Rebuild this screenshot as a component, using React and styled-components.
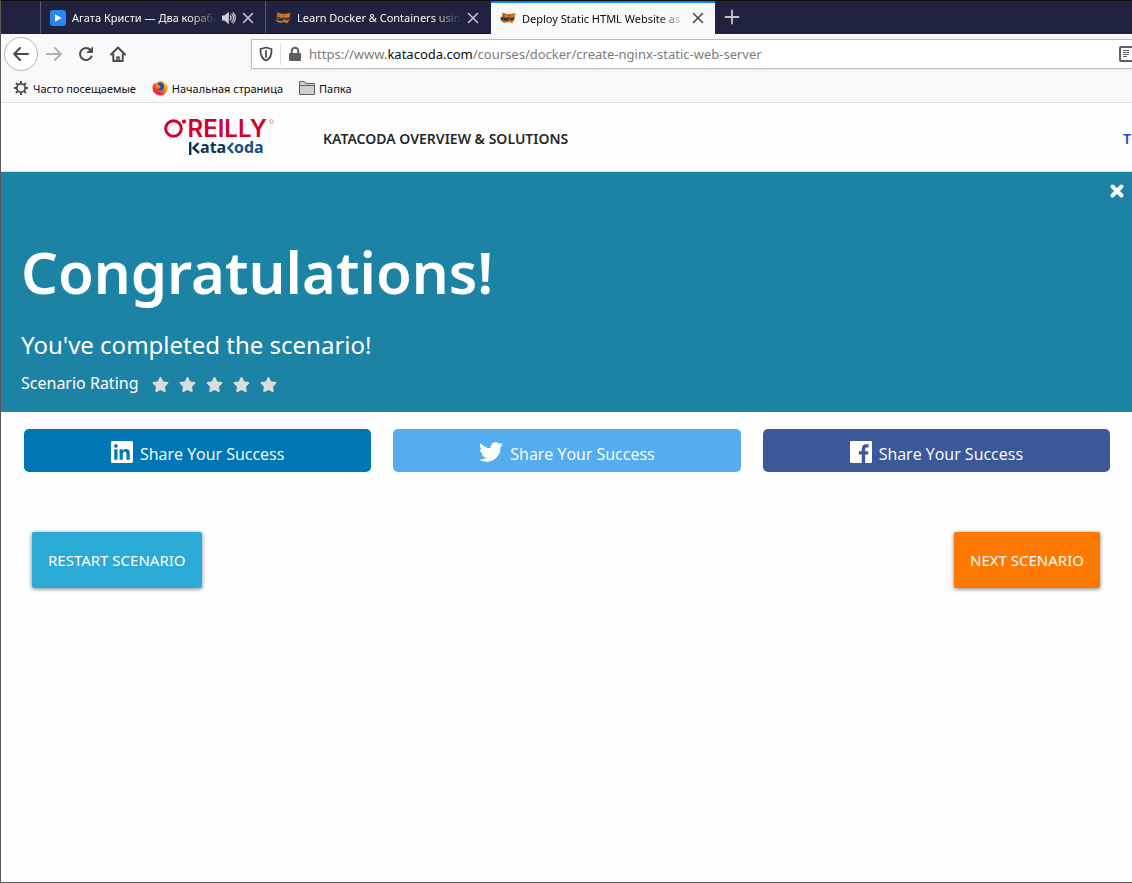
import React from 'react';
import styled, { createGlobalStyle } from 'styled-components';
import { FaStar, FaTwitter } from 'react-icons/fa';

const GlobalStyle = createGlobalStyle`
  *, *::before, *::after { box-sizing: border-box; }
  body { margin: 0; background: #fefefe; font-family: "Noto Sans", "Open Sans", sans-serif; }
  button { font: inherit; }
  svg { display: block; flex: none; }
`;

const Window = styled.div`
  min-height: 100vh;
  display: flex;
  flex-direction: column;
  border-left: 1px solid #5a5a5a;
  border-bottom: 1px solid #5a5a5a;
  overflow: hidden;
`;

const TabBar = styled.div`
  display: flex;
  height: 34px;
  padding-left: 39px;
  background: #20233f;
  border-top: 1px solid #0b0b12;
`;

const Tab = styled.div`
  display: flex;
  align-items: center;
  width: 225px;
  min-width: 0;
  padding: 1px 9px 0 9px;
  font-size: 11px;
  color: ${(p) => (p.$active ? '#0c0c0d' : '#f9f9fa')};
  background: ${(p) => (p.$active ? '#f9f9fa' : 'transparent')};
  border-left: 1px solid ${(p) => (p.$active ? '#20233f' : '#575971')};
  border-bottom: ${(p) => (p.$active ? '0' : '1px solid #1a0f28')};
  box-shadow: ${(p) => (p.$active ? 'inset 0 2px 0 #0a84ff' : 'none')};
`;

const TabTitle = styled.span`
  flex: 1;
  min-width: 0;
  margin: 0 4px 0 6px;
  overflow: hidden;
  white-space: nowrap;
  mask-image: linear-gradient(to left, transparent, #000 28px);
`;

const IconButton = styled.button`
  display: flex;
  align-items: center;
  justify-content: center;
  width: ${(p) => p.$size || 16}px;
  height: ${(p) => p.$size || 16}px;
  padding: 0;
  border: 0;
  background: none;
  color: ${(p) => p.$color || 'inherit'};
`;

const SoundButton = styled(IconButton)`
  margin-right: 3px;
`;

const NewTab = styled(IconButton)`
  width: 34px;
  height: 32px;
  color: #c4c5cf;
`;

const Toolbar = styled.div`
  display: flex;
  align-items: center;
  height: 40px;
  padding-left: 3px;
  background: #f9f9fa;
  color: #4a4a4f;
`;

const BackButton = styled(IconButton)`
  width: 34px;
  height: 34px;
  border: 1px solid #b4b4b6;
  border-radius: 50%;
  background: #fff;
`;

const NavButton = styled(IconButton)`
  width: 32px;
  height: 32px;
  opacity: ${(p) => (p.disabled ? 0.4 : 1)};
`;

const UrlField = styled.div`
  display: flex;
  flex: 1;
  min-width: 0;
  align-items: center;
  height: 30px;
  margin-left: 117px;
  padding-left: 6px;
  background: #fff;
  border: 1px solid #bcbcbe;
  border-right: 0;
  box-shadow: 0 1px 4px rgba(0, 0, 0, 0.07);
`;

const Divider = styled.span`
  width: 1px;
  height: 22px;
  margin: 0 6px;
  background: #dcdcde;
`;

const Address = styled.span`
  flex: 1;
  min-width: 0;
  margin-left: 6px;
  overflow: hidden;
  white-space: nowrap;
  font-size: 13px;
  color: #7b7b7d;
  b { font-weight: 400; color: #0c0c0d; }
`;

const Bookmarks = styled.nav`
  display: flex;
  align-items: center;
  gap: 16px;
  height: 29px;
  padding: 0 12px;
  font-size: 11px;
  background: #f9f9fa;
  border-bottom: 1px solid #e0e0e2;
`;

const Bookmark = styled.a`
  display: flex;
  align-items: center;
  gap: 4px;
  color: #0c0c0d;
  text-decoration: none;
  white-space: nowrap;
`;

const SiteHeader = styled.header`
  display: flex;
  align-items: center;
  height: 69px;
  padding-left: 162px;
  border-bottom: 1px solid #dcdcdc;
`;

const SiteLink = styled.a`
  margin-left: ${(p) => (p.$end ? 'auto' : '48px')};
  padding: 3px ${(p) => (p.$end ? 1 : 0)}px 0 0;
  font-size: 14px;
  font-weight: 600;
  color: ${(p) => (p.$end ? '#0a4cf5' : '#26292b')};
  text-decoration: none;
  white-space: nowrap;
`;

const Banner = styled.section`
  display: flex;
  flex-direction: column;
  height: 240px;
  padding: 7px 3px 0 20px;
  color: #fff;
  background: #1d83a5;
`;

const CloseButton = styled(IconButton)`
  width: 24px;
  height: 24px;
  align-self: flex-end;
`;

const Title = styled.h1`
  margin: 25px 0 0;
  font-size: 58px;
  line-height: 88px;
  font-weight: 600;
`;

const Subtitle = styled.h2`
  margin: 10px 0 0;
  font-size: 24px;
  line-height: 38px;
  font-weight: 400;
`;

const Rating = styled.div`
  display: flex;
  align-items: center;
  gap: 13px;
  height: 38px;
  font-size: 16px;
`;

const Stars = styled.div`
  display: flex;
  gap: 9px;
  padding-top: 2px;
  color: #dcdcdc;
`;

const ShareRow = styled.div`
  display: grid;
  grid-template-columns: repeat(3, 1fr);
  gap: 22px;
  padding: 17px 22px 0 23px;
`;

const ShareButton = styled.button`
  display: flex;
  align-items: center;
  justify-content: center;
  gap: 7px;
  height: 43px;
  padding: 3px 0 0;
  border: 0;
  border-radius: 5px;
  font-family: "Open Sans", sans-serif;
  font-size: 16px;
  color: #fff;
  background: ${(p) => p.$color};
`;

const ShareLabel = styled.span`
  padding-top: 4px;
`;

const Actions = styled.div`
  display: flex;
  justify-content: space-between;
  padding: 60px 32px 0 31px;
`;

const ActionButton = styled.button`
  height: 56px;
  padding: 0 16px;
  border: 0;
  border-radius: 2px;
  font-size: 15px;
  text-transform: uppercase;
  color: #fff;
  background: ${(p) => p.$color};
  box-shadow: 0 1px 4px rgba(0, 0, 0, 0.5);
`;

const Stroke = ({ size = 16, children, ...rest }) => (
  <svg width={size} height={size} viewBox="0 0 16 16" fill="none" stroke="currentColor" strokeWidth="2" strokeLinecap="round" strokeLinejoin="round" {...rest}>
    {children}
  </svg>
);

const CloseTab = ({ color }) => (
  <IconButton aria-label="Close tab" $color={color}>
    <Stroke strokeWidth="1.6"><path d="M3.5 3.5l9 9M12.5 3.5l-9 9" /></Stroke>
  </IconButton>
);

const PlayIcon = () => (
  <svg width="16" height="16" viewBox="0 0 16 16">
    <rect width="16" height="16" rx="3" fill="#2787f5" />
    <path d="M5 4.2v7.6L11.6 8z" fill="#fff" />
  </svg>
);

const CatIcon = () => (
  <svg width="16" height="16" viewBox="0 0 16 16">
    <path d="M2.600 2.200l2.600 1.400 4.300.4 6-1-.7 3.600-.6 3.400-1.600 3-3.600-.8-4.500.6-3.700-2L1.500 8z" fill="#d9741c" />
    <path d="M.5 7.600l3-.9 2.700 1.200 2.500-.7 3 .9 3-1-.8 2.400-2.300 1-2.400-.9-2 1.300-3-.2L.6 9.600z" fill="#26384f" />
    <path d="M3 4.500l2 .6-1.400.9zM8 5l2.500.3-1.200 1z" fill="#5b4637" />
    <path d="M2 8.200l1.700-.3.600 1zM8 9l2-.6.7 1z" fill="#7f93a6" />
    <path d="M1 10.300l3 1.700 2.500-.3-.8.9-2.500-.2z" fill="#6b747e" />
  </svg>
);

const SpeakerIcon = () => (
  <svg width="14" height="14" viewBox="0 0 14 14" fill="none" stroke="#d0d1da" strokeWidth="1.2" strokeLinecap="round">
    <path d="M.6 5h2.200L6.200 2v10L2.800 9H.6z" fill="#d0d1da" />
    <path d="M8.300 5a3 3 0 0 1 0 4M9.800 3.200a5 5 0 0 1 0 7.600M11 1.800a7 7 0 0 1 0 10.400" />
  </svg>
);

const GearIcon = () => (
  <svg width="16" height="16" viewBox="0 0 16 16" fill="none" stroke="#4a4a4f">
    <circle cx="8" cy="8" r="4.200" strokeWidth="1.800" />
    <path d="M8 1v2.500M8 12.500V15M1 8h2.500M12.500 8H15M3 3l1.900 1.900M11.100 11.100L13 13M3 13l1.900-1.900M11.100 4.900L13 3" strokeWidth="2" />
  </svg>
);

const FirefoxIcon = () => (
  <svg width="16" height="16" viewBox="0 0 16 16">
    <defs>
      <linearGradient id="flame" x1="1" y1="0" x2="0.2" y2="1">
        <stop offset="0" stopColor="#fff04a" />
        <stop offset=".4" stopColor="#ff9a1a" />
        <stop offset=".75" stopColor="#f5342e" />
        <stop offset="1" stopColor="#e01084" />
      </linearGradient>
    </defs>
    <path d="M2 3l.6 1L4 2l.8 1.200C6 2 7 1 8.800 .5c3 .4 6.700 3 6.700 7.300A7.500 7.500 0 0 1 .5 8C.5 6 1 4.500 2 3z" fill="url(#flame)" />
    <path d="M6 3c2-1.500 4.500-.5 5.500 1.500s.8 4.500-1 5.500-4.500.5-5-1.500c1.500.6 3-.2 3-1.200L6 6z" fill="#1f4fb5" />
    <path d="M4.200 4.800L6.500 5l2 1.300-1.800 1-.8 1.500C4.500 8 4 6.500 4.200 4.800z" fill="#ff8a16" />
  </svg>
);

const FolderIcon = () => (
  <svg width="16" height="16" viewBox="0 0 16 16" stroke="#5f5f62">
    <path d="M.5 14.500v-13h5l1.500 2h8.500v11z" fill="#cfcfd1" />
    <path d="M.5 5.500h15" />
  </svg>
);

const Logo = () => (
  <svg width="112" height="44" viewBox="0 0 112 44" role="img" aria-label="O'Reilly Katacoda">
    <circle cx="10.500" cy="13.500" r="7.800" fill="none" stroke="#d3002d" strokeWidth="3" />
    <circle cx="21" cy="6.500" r="2.600" fill="#d3002d" stroke="#fefefe" strokeWidth="1" />
    <text x="24.500" y="22" fontFamily="Inter, sans-serif" fontSize="24" fontWeight="600" fill="#d3002d">REILLY</text>
    <circle cx="108.500" cy="6.500" r="1.800" fill="none" stroke="#e88a9c" strokeWidth="1" />
    <path d="M27.200 27v13M35.500 28l-5 5 5.500 5" fill="none" stroke="#0b3553" strokeWidth="2.400" />
    <text x="37" y="38" fontFamily="Open Sans, sans-serif" fontSize="16" fontWeight="700" fill="#0b3553">ata</text>
    <path d="M70 28l-4.500 5 4.500 5" fill="none" stroke="#0f4f8a" strokeWidth="2.400" />
    <text x="71" y="38" fontFamily="Open Sans, sans-serif" fontSize="16" fontWeight="700" fill="#0f4f8a">oda</text>
  </svg>
);

const LinkedinIcon = () => (
  <svg width="22" height="22" viewBox="0 0 24 24" fill="currentColor">
    <path d="M20.447 20.452h-3.554v-5.569c0-1.328-.027-3.037-1.852-3.037-1.853 0-2.136 1.445-2.136 2.939v5.667H9.351V9h3.414v1.561h.046c.477-.9 1.637-1.850 3.370-1.850 3.601 0 4.267 2.370 4.267 5.455v6.286zM5.337 7.433c-1.144 0-2.063-.926-2.063-2.065 0-1.138.92-2.063 2.063-2.063 1.140 0 2.064.925 2.064 2.063 0 1.139-.925 2.065-2.064 2.065zm1.782 13.019H3.555V9h3.564v11.452zM22.225 0H1.771C.792 0 0 .774 0 1.729v20.542C0 23.227.792 24 1.771 24h20.451C23.200 24 24 23.227 24 22.271V1.729C24 .774 23.200 0 22.222 0h.003z" />
  </svg>
);

const FacebookIcon = () => (
  <svg width="22" height="22" viewBox="0 0 24 24" fill="currentColor">
    <path d="M22.676 0H1.324C.593 0 0 .593 0 1.324v21.352C0 23.408.593 24 1.324 24h11.494v-9.294H9.689v-3.621h3.129V8.410c0-3.099 1.894-4.785 4.659-4.785 1.325 0 2.464.097 2.796.141v3.240h-1.921c-1.500 0-1.792.721-1.792 1.771v2.311h3.584l-.465 3.630H16.560V24h6.115c.733 0 1.325-.592 1.325-1.324V1.324C24 .593 23.408 0 22.676 0" />
  </svg>
);

const shares = [
  { name: 'LinkedIn', color: '#0077b5', icon: <LinkedinIcon /> },
  { name: 'Twitter', color: '#55acee', icon: <FaTwitter size={24} /> },
  { name: 'Facebook', color: '#3b5998', icon: <FacebookIcon /> },
];

export default function App() {
  return (
    <>
      <GlobalStyle />
      <Window>
        <TabBar>
          <Tab>
            <PlayIcon />
            <TabTitle>Агата Кристи — Два корабля</TabTitle>
            <SoundButton aria-label="Mute tab"><SpeakerIcon /></SoundButton>
            <CloseTab color="#c4c5cf" />
          </Tab>
          <Tab>
            <CatIcon />
            <TabTitle>Learn Docker &amp; Containers using</TabTitle>
            <CloseTab color="#c4c5cf" />
          </Tab>
          <Tab $active>
            <CatIcon />
            <TabTitle>Deploy Static HTML Website as</TabTitle>
            <CloseTab color="#4a4a4f" />
          </Tab>
          <NewTab aria-label="New tab">
            <Stroke strokeWidth="1.800"><path d="M8 1.500v13M1.500 8h13" /></Stroke>
          </NewTab>
        </TabBar>

        <Toolbar>
          <BackButton aria-label="Back">
            <Stroke><path d="M15 8H1.500M7 2L1.200 8 7 14" /></Stroke>
          </BackButton>
          <NavButton aria-label="Forward" disabled>
            <Stroke><path d="M1 8h13.500M9 2l5.800 6L9 14" /></Stroke>
          </NavButton>
          <NavButton aria-label="Reload">
            <Stroke>
              <path d="M13.500 10.500A6 6 0 1 1 12.500 4" />
              <path d="M14.500 1.500v5h-5z" fill="currentColor" strokeWidth="1" />
            </Stroke>
          </NavButton>
          <NavButton aria-label="Home">
            <Stroke>
              <path d="M1 8.500l7-7 7 7M3.300 8.500V15h9.400V8.500" />
              <path d="M7 15v-4h2v4" strokeWidth="1.500" />
            </Stroke>
          </NavButton>
          <UrlField>
            <Stroke strokeWidth="1.800">
              <path d="M8 1.500l5.500 1.500c.3 5-.8 9.500-5.500 11.500C3.300 12.500 2.200 8 2.500 3z" />
              <path d="M8 5v6" />
            </Stroke>
            <Divider />
            <svg width="16" height="16" viewBox="0 0 16 16" fill="#5f5f62">
              <path d="M4.700 7V5a3.300 3.300 0 0 1 6.600 0v2" fill="none" stroke="#5f5f62" strokeWidth="2" />
              <rect x="2" y="7" width="12" height="8" rx="1" />
            </svg>
            <Address>https://www.<b>katacoda.com</b>/courses/docker/create-nginx-static-web-server</Address>
            <svg width="14" height="16" viewBox="0 0 14 16" fill="none" stroke="#5f5f62">
              <rect x="2" y="1" width="13" height="14" rx="1" strokeWidth="2" />
              <path d="M5 4.500h6M5 6.500h6M5 8.500h6M5 10.500h4" />
            </svg>
          </UrlField>
        </Toolbar>

        <Bookmarks>
          <Bookmark href="#"><GearIcon />Часто посещаемые</Bookmark>
          <Bookmark href="#"><FirefoxIcon />Начальная страница</Bookmark>
          <Bookmark href="#"><FolderIcon />Папка</Bookmark>
        </Bookmarks>

        <SiteHeader>
          <Logo />
          <SiteLink href="#">KATACODA OVERVIEW &amp; SOLUTIONS</SiteLink>
          <SiteLink href="#" $end>T</SiteLink>
        </SiteHeader>

        <Banner>
          <CloseButton aria-label="Close">
            <Stroke strokeWidth="4"><path d="M3.500 3.500l9 9M12.500 3.500l-9 9" /></Stroke>
          </CloseButton>
          <Title>Congratulations!</Title>
          <Subtitle>You've completed the scenario!</Subtitle>
          <Rating>
            <span>Scenario Rating</span>
            <Stars>
              {[1, 2, 3, 4, 5].map((n) => (
                <IconButton key={n} $size={18} aria-label={`Rate ${n}`}><FaStar size={17} /></IconButton>
              ))}
            </Stars>
          </Rating>
        </Banner>

        <ShareRow>
          {shares.map((s) => (
            <ShareButton key={s.name} $color={s.color}>
              {s.icon}
              <ShareLabel>Share Your Success</ShareLabel>
            </ShareButton>
          ))}
        </ShareRow>

        <Actions>
          <ActionButton $color="#2caad6">Restart Scenario</ActionButton>
          <ActionButton $color="#ff7800">Next Scenario</ActionButton>
        </Actions>
      </Window>
    </>
  );
}
